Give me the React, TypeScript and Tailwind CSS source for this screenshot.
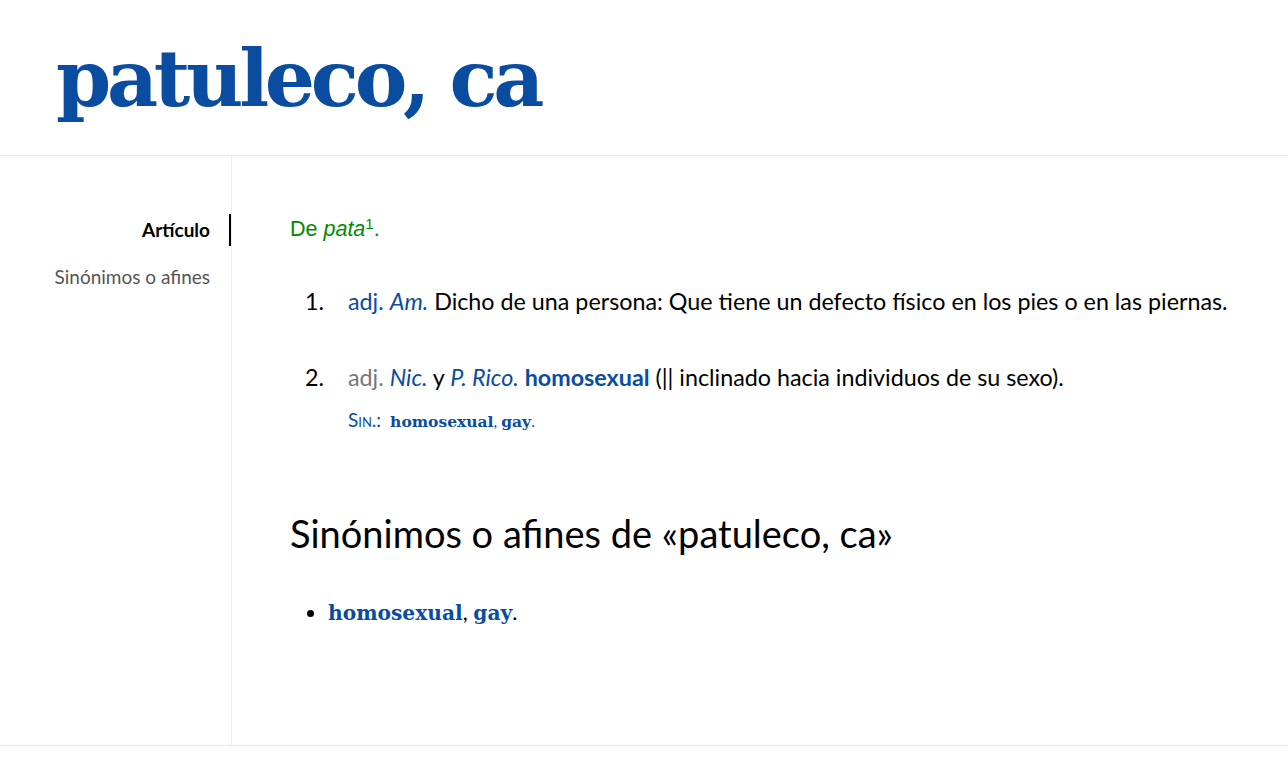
export default function App() {
  const serif = { fontFamily: '"DejaVu Serif", "Liberation Serif", serif' }
  return (
    <div className="min-h-screen bg-white" style={{ fontFamily: 'Lato, "Noto Sans", sans-serif' }}>
      <header className="h-[156px] border-b border-[#e8e8e8] pl-[56px] pt-[24px]">
        <h1 className="text-[79px] font-bold leading-[110px] tracking-[-4.3px] text-[#0a4c9f]" style={serif}>
          patuleco, ca
        </h1>
      </header>

      <div className="flex h-[590px] border-b border-[#e8e8e8]">
        <nav className="w-[232px] shrink-0 border-r border-[#ececec] pt-[58px] text-right text-[19px]">
          <div className="flex justify-end">
            <span className="border-r-2 border-black py-[4px] pr-[19px] font-bold leading-[24px] text-black">Artículo</span>
          </div>
          <div className="mt-[19px] pr-[21px] leading-[24px] text-[#555]">Sinónimos o afines</div>
        </nav>

        <main className="flex-1 pl-[58px] pt-[57px]">
          <p className="text-[21.5px] leading-[32px] text-[#008a00]" style={{ fontFamily: '"Liberation Sans", Arial, sans-serif' }}>
            De <i>pata</i>
            <sup className="text-[15px]">1</sup>.
          </p>

          <ol className="mt-[39px] text-[23.3px] leading-[34px] text-black">
            <li className="flex">
              <span className="w-[58px] shrink-0 pl-[15px]">1.</span>
              <span>
                <span className="text-[#0a4c9f]">adj.</span> <i className="text-[#0a4c9f]">Am.</i> Dicho de una persona: Que tiene un
                defecto físico en los pies o en las piernas.
              </span>
            </li>
            <li className="mt-[42px] flex">
              <span className="w-[58px] shrink-0 pl-[15px]">2.</span>
              <div>
                <div>
                  <span className="text-[#777]">adj.</span> <i className="text-[#0a4c9f]">Nic.</i> y{' '}
                  <i className="text-[#0a4c9f]">P. Rico.</i> <b className="text-[#0a4c9f]">homosexual</b> (|| inclinado hacia individuos de
                  su sexo).
                </div>
                <div className="mt-[14px] text-[19px] leading-[24px] text-[#0a4c9f]">
                  <span className="mr-[9px] [font-variant:small-caps]">Sin.:</span>
                  <span className="font-bold" style={{ ...serif, fontSize: '15.5px' }}>
                    homosexual
                  </span>
                  <span className="text-[16px]">, </span>
                  <span className="font-bold" style={{ ...serif, fontSize: '15.5px' }}>
                    gay
                  </span>
                  <span className="text-[16px]">.</span>
                </div>
              </div>
            </li>
          </ol>

          <h2 className="mt-[76px] text-[38px] leading-[46px] text-black">Sinónimos o afines de «patuleco, ca»</h2>

          <ul className="mt-[40px] list-disc pl-[38px] text-[22px] leading-[32px]">
            <li>
              <span className="text-[20.2px] font-bold text-[#0a4c9f]" style={serif}>
                homosexual
              </span>
              , <span className="text-[20.2px] font-bold text-[#0a4c9f]" style={serif}>gay</span>.
            </li>
          </ul>
        </main>
      </div>
    </div>
  )
}
